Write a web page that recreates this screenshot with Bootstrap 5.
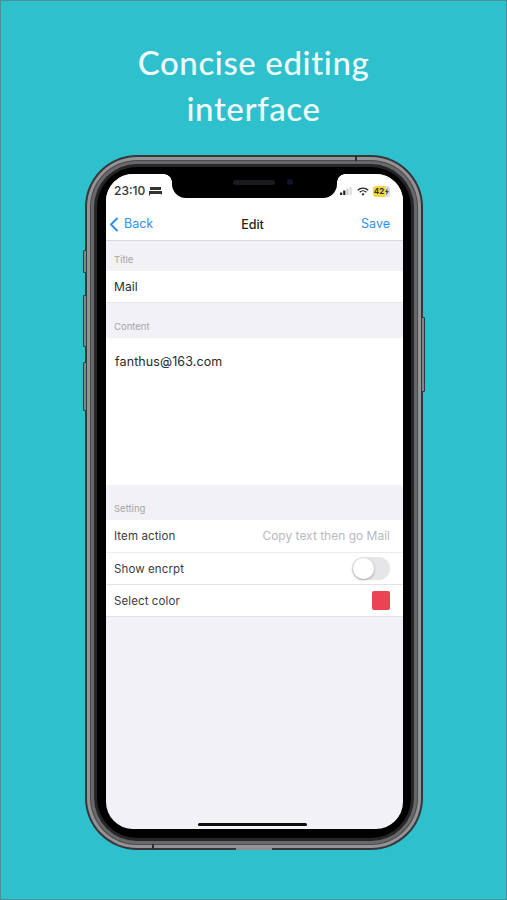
<!DOCTYPE html>
<html lang="en">
<head>
<meta charset="utf-8">
<title>Concise editing interface</title>
<link href="https://cdn.jsdelivr.net/npm/bootstrap@5.3.0/dist/css/bootstrap.min.css" rel="stylesheet">
<style>
html,body{height:900px;overflow:hidden}
body{background:#2ec0cc;font-family:"Inter","Liberation Sans",sans-serif;color:#222}
.promo{width:507px;height:900px;padding-top:39px;box-shadow:inset 0 0 0 1px #4a8f96}
.promo-title{font-family:"Lato","Liberation Sans",sans-serif;font-weight:500;font-size:33px;line-height:46px;letter-spacing:.6px;color:#f2fbfc;text-align:center;margin:0 0 24px}
.shell{position:relative;width:338px;height:695px;margin-left:85px;border-radius:52px;background:#36363a;padding:2px}
.band-a{height:100%;border-radius:50px;background:#949496;padding:3px}
.band-b{height:100%;border-radius:47px;background:#4a4a4c;padding:1px}
.band-c{height:100%;border-radius:46px;background:#68686a;padding:3px}
.band-d{height:100%;border-radius:43px;background:#262628;padding:3px}
.bezel{height:100%;border-radius:40px;background:#000;padding:7px 8px 9px 9px}
.screen{position:relative;height:100%;border-radius:27px;overflow:hidden;background:#f1f1f6}
.side-key{position:absolute;width:4px;background:#858588;border:1px solid #2d3a40;border-radius:1px}
.key-ring{left:-2px;top:95px;height:23px}
.key-up{left:-2px;top:140px;height:52px}
.key-down{left:-2px;top:207px;height:49px}
.key-power{right:-2px;top:162px;height:75px}
.seam{position:absolute;width:2px;height:5px;background:#2e2e30}
.seam-top{left:270px;top:1px}
.seam-bottom{left:67px;bottom:1px}
.port-bump{position:absolute;left:151px;bottom:0;width:36px;height:2px;background:#8d8d8f}
.speaker-notch{position:absolute;left:66px;top:0;width:165px;height:24px;background:#000;border-radius:0 0 14px 14px;z-index:2}
.speaker-notch::before,.speaker-notch::after{content:"";position:absolute;top:0;width:8px;height:8px}
.speaker-notch::before{left:-8px;background:radial-gradient(circle at 0 100%,transparent 7.500px,#000 8px)}
.speaker-notch::after{right:-8px;background:radial-gradient(circle at 100% 100%,transparent 7.500px,#000 8px)}
.speaker{position:absolute;left:61px;top:6px;width:42px;height:5px;border-radius:3px;background:#1b1b1f}
.camera{position:absolute;left:115px;top:5px;width:6px;height:6px;border-radius:50%;background:#10142c}
.status-line{height:33px;background:#fff;padding:9px 13px 0 8px;font-size:12px;font-weight:500;color:#333;line-height:16px}
.status-line>div{height:16px}
.batt{background:linear-gradient(90deg,#f3d53d 68%,#dcdcdc 68%);border-radius:3px;width:17px;height:11px;font-size:8px;line-height:11px;font-weight:700;color:#333;gap:1px}
.nav-line{height:34px;background:#fff;border-bottom:1px solid #d9d9de;padding:2px 13px 0 3px;font-size:12.500px}
.back-link{gap:5px}
.ios-blue{color:#2f8fee}
.nav-head{font-weight:500;color:#222;margin-top:1px;margin-left:-2px}
.group-label{font-size:9.500px;color:#a5a5aa;padding-left:8px;line-height:12px}
.lbl-one{height:30px;padding-top:13px}
.lbl-two{height:35px;padding-top:18px}
.cell{background:#fff;padding:0 13px 0 8px;font-size:11.500px;color:#3b3b3e;letter-spacing:.1px}
.cell-title{height:32px;font-size:12px;border-bottom:1px solid #e6e6ea;color:#2a2a2c;padding-top:1px}
.cell-body{height:147px;padding:10px 9px;font-size:12.500px;line-height:27px;color:#2a2a2c;letter-spacing:.1px}
.cell-row{height:33px;border-bottom:1px solid #ececf0}
.cell-last{height:32px;border-bottom:1px solid #e2e2e6}
.row-text{padding-top:2px}
.muted-val{color:#b9b9be;font-size:12px;letter-spacing:0}
.ios-switch{width:38px;height:23px;border-radius:12px;background:#e6e6e9;padding:1px}
.ios-knob{width:21px;height:21px;border-radius:50%;background:#fff;box-shadow:0 1px 3px rgba(0,0,0,.3)}
.swatch{width:18px;height:19px;border-radius:2px;background:#ec4352}
.home-bar{position:absolute;left:92px;bottom:3px;width:109px;height:3px;border-radius:2px;background:#0c0c0c}
</style>
</head>
<body>
<div class="promo">
  <h1 class="promo-title">Concise editing<br>interface</h1>
  <div class="shell">
    <span class="side-key key-ring"></span>
    <span class="side-key key-up"></span>
    <span class="side-key key-down"></span>
    <span class="side-key key-power"></span>
    <div class="band-a"><div class="band-b"><div class="band-c"><div class="band-d"><div class="bezel">
      <div class="screen">
        <div class="speaker-notch"><span class="speaker"></span><span class="camera"></span></div>
        <div class="status-line d-flex justify-content-between">
          <div class="d-flex align-items-center gap-1">
            <span>23:10</span>
            <svg width="13" height="9" viewBox="0 0 13 9" fill="#333"><path d="M1 0h11v3H1zM0 4h13v3.500H12V7H1v1.500H0z"/></svg>
          </div>
          <div class="d-flex align-items-center gap-1">
            <svg width="13" height="8" viewBox="0 0 13 8"><rect x="0" y="5.500" width="2.200" height="2.500" fill="#222"/><rect x="3.200" y="3.500" width="2.200" height="4.500" fill="#222"/><rect x="6.400" y="1.800" width="2.200" height="6.200" fill="#ccc"/><rect x="9.600" y="0" width="2.200" height="8" fill="#ddd"/></svg>
            <svg width="12" height="9" viewBox="0 0 12 9" fill="none" stroke="#222" stroke-width="1.400"><path d="M.8 3.200a7.500 7.500 0 0 1 10.400 0M2.700 5.200a4.800 4.800 0 0 1 6.600 0"/><path d="M6 8.800 4.500 7a2.200 2.200 0 0 1 3 0z" fill="#222" stroke="none"/></svg>
            <span class="batt d-flex align-items-center justify-content-center">42<svg width="4" height="7" viewBox="0 0 4 7" fill="#444"><path d="M2.500 0 0 4h1.500L1 7l3-4H2.300z"/></svg></span>
          </div>
        </div>
        <div class="nav-line d-flex align-items-center justify-content-between position-relative">
          <div class="d-flex align-items-center ios-blue back-link">
            <svg width="10" height="15" viewBox="0 0 10 15" fill="none" stroke="#2f8fee" stroke-width="2" stroke-linecap="round" stroke-linejoin="round"><path d="M8 1.500 2 7.500l6 6"/></svg>
            <span>Back</span>
          </div>
          <span class="nav-head position-absolute top-50 start-50 translate-middle">Edit</span>
          <span class="ios-blue">Save</span>
        </div>
        <div class="group-label lbl-one">Title</div>
        <div class="cell cell-title d-flex align-items-center">Mail</div>
        <div class="group-label lbl-two">Content</div>
        <div class="cell cell-body">fanthus@163.com</div>
        <div class="group-label lbl-two">Setting</div>
        <div class="cell cell-row d-flex align-items-center justify-content-between"><span class="row-text">Item action</span><span class="muted-val">Copy text then go Mail</span></div>
        <div class="cell cell-last d-flex align-items-center justify-content-between"><span class="row-text">Show encrpt</span><div class="ios-switch"><div class="ios-knob"></div></div></div>
        <div class="cell cell-last d-flex align-items-center justify-content-between"><span class="row-text">Select color</span><div class="swatch"></div></div>
        <div class="home-bar"></div>
      </div>
    </div></div></div></div></div>
    <span class="seam seam-top"></span>
    <span class="seam seam-bottom"></span>
    <span class="port-bump"></span>
  </div>
</div>
<script src="https://cdn.jsdelivr.net/npm/bootstrap@5.3.0/dist/js/bootstrap.bundle.min.js"></script>
</body>
</html>
